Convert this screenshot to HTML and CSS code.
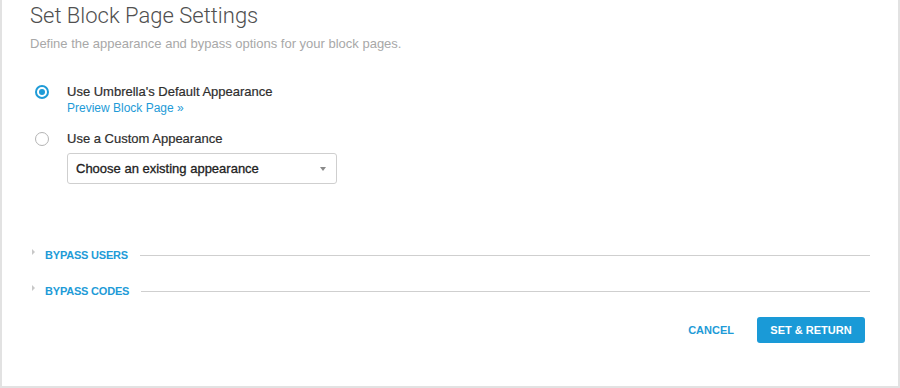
FILE: index.html
```html
<!DOCTYPE html>
<html>
<head>
<meta charset="utf-8">
<link rel="stylesheet" href="styles.css">
</head>
<body>
<div class="panel">
  <h1 class="title">Set Block Page Settings</h1>
  <p class="subtitle">Define the appearance and bypass options for your block pages.</p>

  <div class="options">
    <div class="option">
      <span class="radio checked"></span>
      <div class="option-body">
        <div class="option-label">Use Umbrella's Default Appearance</div>
        <a class="preview" href="#">Preview Block Page &raquo;</a>
      </div>
    </div>
    <div class="option option-2">
      <span class="radio"></span>
      <div class="option-body">
        <div class="option-label">Use a Custom Appearance</div>
        <div class="select">
          <span>Choose an existing appearance</span>
          <span class="caret"></span>
        </div>
      </div>
    </div>
  </div>

  <div class="sections">
    <div class="section">
      <span class="tri"></span>
      <span class="section-label">BYPASS USERS</span>
      <span class="rule"></span>
    </div>
    <div class="section">
      <span class="tri"></span>
      <span class="section-label">BYPASS CODES</span>
      <span class="rule"></span>
    </div>
  </div>

  <div class="actions">
    <a class="cancel" href="#">CANCEL</a>
    <button class="primary">SET &amp; RETURN</button>
  </div>
</div>
</body>
</html>
```

FILE: styles.css
```css
html, body {
  margin: 0;
  padding: 0;
  background: #ffffff;
}

body {
  font-family: "Liberation Sans", Arial, sans-serif;
  color: #333333;
}

.panel {
  box-sizing: border-box;
  width: 900px;
  height: 388px;
  border-left: 2px solid #e2e2e2;
  border-right: 2px solid #e2e2e2;
  border-bottom: 2px solid #e2e2e2;
  padding: 2px 28px 0 28px;
}

.title {
  margin: 0;
  font-family: Roboto, "Liberation Sans", sans-serif;
  font-weight: 300;
  font-size: 22px;
  line-height: 27px;
  color: #505050;
}

.subtitle {
  margin: 7px 0 0 0;
  font-size: 13px;
  line-height: 16px;
  color: #a8a8a8;
}

.options {
  margin-top: 32px;
  padding-left: 5px;
  display: flex;
  flex-direction: column;
  gap: 15px;
}

.option {
  display: flex;
  align-items: flex-start;
  gap: 18px;
}

.radio {
  box-sizing: border-box;
  width: 14px;
  height: 14px;
  margin-top: 1px;
  border-radius: 50%;
  border: 1.5px solid #b4b4b4;
  flex: none;
  position: relative;
}

.radio.checked {
  border: 2px solid #1e9bd7;
}

.radio.checked::after {
  content: "";
  position: absolute;
  left: 2px;
  top: 2px;
  width: 6px;
  height: 6px;
  border-radius: 50%;
  background: #1e9bd7;
}

.option-body {
  display: flex;
  flex-direction: column;
}

.option-label {
  font-size: 13px;
  line-height: 16px;
  color: #2e2e2e;
  -webkit-text-stroke: 0.2px #2e2e2e;
}

.preview {
  margin-top: 1px;
  font-size: 12px;
  line-height: 15px;
  color: #1e9bd7;
  text-decoration: none;
}

.select {
  box-sizing: border-box;
  margin-top: 6px;
  width: 270px;
  height: 31px;
  border: 1px solid #cfcfcf;
  border-radius: 3px;
  padding: 0 10px 0 8px;
  display: flex;
  align-items: center;
  justify-content: space-between;
  font-size: 13px;
  line-height: 29px;
  color: #222222;
  -webkit-text-stroke: 0.3px #222222;
}

.caret {
  width: 0;
  height: 0;
  border-left: 3.5px solid transparent;
  border-right: 3.5px solid transparent;
  border-top: 4px solid #8a8a8a;
}

.sections {
  margin-top: 64px;
  display: flex;
  flex-direction: column;
  gap: 22px;
}

.section {
  display: flex;
  align-items: center;
  height: 14px;
}

.tri {
  width: 0;
  height: 0;
  margin-left: 2px;
  margin-right: 10px;
  margin-top: -6px;
  border-top: 3px solid transparent;
  border-bottom: 3px solid transparent;
  border-left: 3.5px solid #c8c8c8;
}

.section-label {
  font-size: 11px;
  line-height: 14px;
  font-weight: bold;
  letter-spacing: -0.2px;
  color: #1e9bd7;
}

.rule {
  flex: 1;
  height: 1px;
  margin-left: 12px;
  background: #cfcfcf;
}

.actions {
  margin-top: 19px;
  display: flex;
  justify-content: flex-end;
  align-items: center;
  gap: 23px;
  padding-right: 5px;
}

.cancel {
  font-size: 11px;
  font-weight: bold;
  color: #1e9bd7;
  text-decoration: none;
}

.primary {
  box-sizing: border-box;
  width: 108px;
  height: 26px;
  border: none;
  border-radius: 3px;
  background: #1a9ad7;
  color: #ffffff;
  font-family: "Liberation Sans", Arial, sans-serif;
  font-size: 11px;
  font-weight: bold;
  line-height: 26px;
  padding: 0;
}
```
